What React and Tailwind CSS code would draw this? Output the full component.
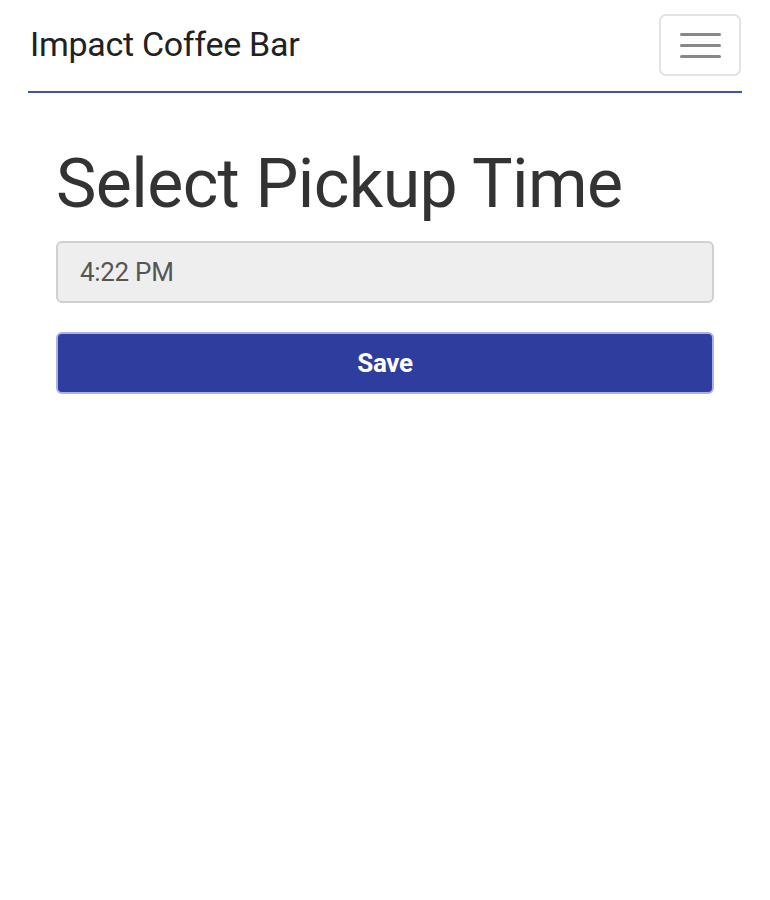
export default function App() {
  return (
    <div className="min-h-screen bg-white font-['Roboto',sans-serif] text-[#212121]">
      {/* navbar */}
      <div className="mx-[28px] border-b-2 border-[#3f51b5] flex items-center justify-between h-[93px] pl-[2px] pb-[3px]">
        <span className="text-[34px] leading-none tracking-[-0.3px] text-[#212121]">Impact Coffee Bar</span>
        <button
          type="button"
          className="w-[82px] h-[62px] border-2 border-[#e3e3e3] rounded-[7px] flex flex-col items-center justify-center gap-[8px] mr-[1px] mt-[2px]"
        >
          <span className="block w-[41px] h-[3px] rounded bg-[#888]"></span>
          <span className="block w-[41px] h-[3px] rounded bg-[#888]"></span>
          <span className="block w-[41px] h-[3px] rounded bg-[#888]"></span>
        </button>
      </div>

      {/* content */}
      <div className="px-[56px] pt-[57px]">
        <h1 className="text-[68px] leading-none tracking-[-0.6px] text-[#333] mb-[23px]">Select Pickup Time</h1>
        <div className="h-[62px] bg-[#eeeeee] border-2 border-[#d0d0d0] rounded-[6px] flex items-center px-[22px] text-[26px] tracking-[-0.3px] text-[#555]">
          4:22 PM
        </div>
        <button
          type="button"
          className="mt-[29px] w-full h-[62px] bg-[#2f3e9e] border-2 border-[#a9b2e6] rounded-[6px] text-white text-[26px] tracking-[-0.3px] font-bold"
        >
          Save
        </button>
      </div>
    </div>
  );
}
